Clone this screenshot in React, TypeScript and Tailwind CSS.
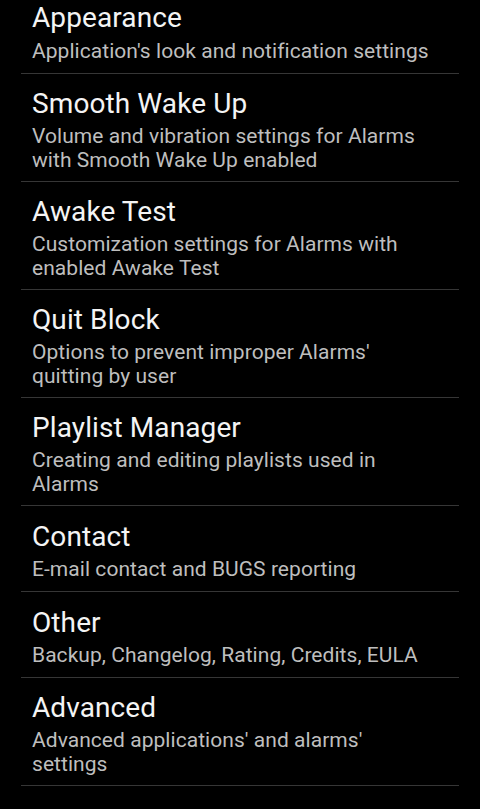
const ITEMS = [
  { title: "Appearance", summary: "Application's look and notification settings" },
  { title: "Smooth Wake Up", summary: "Volume and vibration settings for Alarms with Smooth Wake Up enabled" },
  { title: "Awake Test", summary: "Customization settings for Alarms with enabled Awake Test" },
  { title: "Quit Block", summary: "Options to prevent improper Alarms' quitting by user" },
  { title: "Playlist Manager", summary: "Creating and editing playlists used in Alarms" },
  { title: "Contact", summary: "E-mail contact and BUGS reporting" },
  { title: "Other", summary: "Backup, Changelog, Rating, Credits, EULA" },
  { title: "Advanced", summary: "Advanced applications' and alarms' settings" },
];

export default function App() {
  return (
    <div
      className="h-[809px] w-[480px] overflow-hidden bg-black"
      style={{ fontFamily: "Roboto, 'Noto Sans', sans-serif" }}
    >
      <div className="-mt-[12px] mx-[21px]">
        {ITEMS.map((item) => (
          <div
            key={item.title}
            className="flex min-h-[86px] flex-col justify-center border-b border-[#363636] pl-[11px] pr-[18px] pt-[12.6px] pb-[9px]"
          >
            <div className="text-[28px] leading-[33px] tracking-[0.1px] text-[#f4f4f4]">{item.title}</div>
            <div className="mt-[5.5px] text-[21px] leading-[23.5px] tracking-[0.05px] text-[#bebebe]">
              {item.summary}
            </div>
          </div>
        ))}
      </div>
    </div>
  );
}
